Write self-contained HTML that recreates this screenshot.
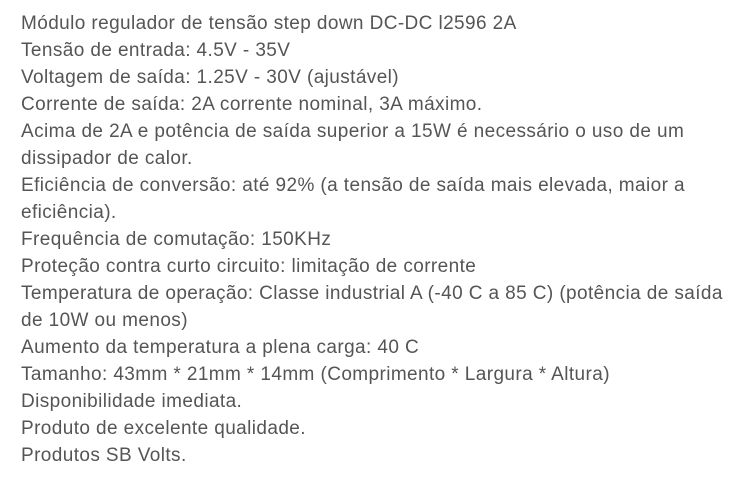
<!DOCTYPE html>
<html><head><meta charset="utf-8"><style>
html,body{margin:0;padding:0;background:#fff;width:742px;height:483px;overflow:hidden}
.t{position:absolute;left:21px;top:10px;font-family:"Liberation Sans",sans-serif;font-size:19px;line-height:27px;color:#555;white-space:nowrap;letter-spacing:0.4px}
</style></head><body><div class="t">
Módulo regulador de tensão step down DC-DC l2596 2A<br>
Tensão de entrada: 4.5V - 35V<br>
Voltagem de saída: 1.25V - 30V (ajustável)<br>
Corrente de saída: 2A corrente nominal, 3A máximo.<br>
Acima de 2A e potência de saída superior a 15W é necessário o uso de um<br>
dissipador de calor.<br>
Eficiência de conversão: até 92% (a tensão de saída mais elevada, maior a<br>
eficiência).<br>
Frequência de comutação: 150KHz<br>
Proteção contra curto circuito: limitação de corrente<br>
Temperatura de operação: Classe industrial A (-40 C a 85 C) (potência de saída<br>
de 10W ou menos)<br>
Aumento da temperatura a plena carga: 40 C<br>
Tamanho: 43mm * 21mm * 14mm (Comprimento * Largura * Altura)<br>
Disponibilidade imediata.<br>
Produto de excelente qualidade.<br>
Produtos SB Volts.
</div></body></html>
